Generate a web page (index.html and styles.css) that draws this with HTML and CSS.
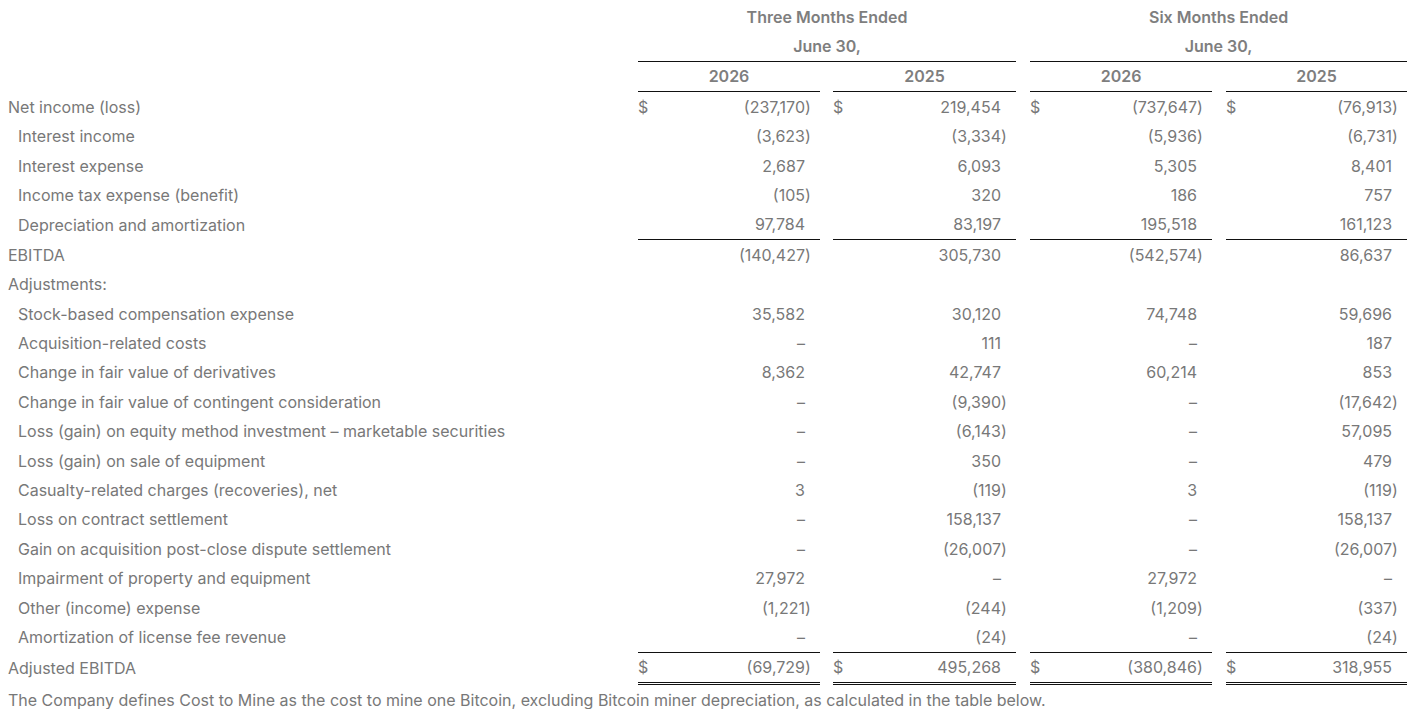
FILE: index.html
```html
<!DOCTYPE html>
<html lang="en">
<head>
<meta charset="utf-8">
<title>Adjusted EBITDA reconciliation</title>
<link rel="stylesheet" href="styles.css">
</head>
<body>
<table class="fin">
  <colgroup>
    <col class="c-label">
    <col class="c-cur"><col class="c-num-a"><col class="c-par">
    <col class="c-gap-a">
    <col class="c-cur"><col class="c-num-b"><col class="c-par">
    <col class="c-gap">
    <col class="c-cur"><col class="c-num-a"><col class="c-par">
    <col class="c-gap">
    <col class="c-cur"><col class="c-num-d"><col class="c-par">
  </colgroup>
  <thead>
    <tr>
      <th></th>
      <th colspan="7" class="hd">Three Months Ended</th>
      <th></th>
      <th colspan="7" class="hd">Six Months Ended</th>
    </tr>
    <tr>
      <th></th>
      <th colspan="7" class="hd line">June 30,</th>
      <th></th>
      <th colspan="7" class="hd line">June 30,</th>
    </tr>
    <tr>
      <th></th>
      <th colspan="3" class="hd line">2026</th>
      <th></th>
      <th colspan="3" class="hd line">2025</th>
      <th></th>
      <th colspan="3" class="hd line">2026</th>
      <th></th>
      <th colspan="3" class="hd line">2025</th>
    </tr>
  </thead>
  <tbody id="rows"></tbody>
</table>
<p class="note">The Company defines Cost to Mine as the cost to mine one Bitcoin, excluding Bitcoin miner depreciation, as calculated in the table below.</p>
<script src="app.js"></script>
</body>
</html>
```

FILE: app.js
```js
const rows = [
  { l: "Net income (loss)", v: ["(237,170)", "219,454", "(737,647)", "(76,913)"], cur: true },
  { l: "Interest income", v: ["(3,623)", "(3,334)", "(5,936)", "(6,731)"], ind: true },
  { l: "Interest expense", v: ["2,687", "6,093", "5,305", "8,401"], ind: true },
  { l: "Income tax expense (benefit)", v: ["(105)", "320", "186", "757"], ind: true },
  { l: "Depreciation and amortization", v: ["97,784", "83,197", "195,518", "161,123"], ind: true, under: true },
  { l: "EBITDA", v: ["(140,427)", "305,730", "(542,574)", "86,637"] },
  { l: "Adjustments:", v: null },
  { l: "Stock-based compensation expense", v: ["35,582", "30,120", "74,748", "59,696"], ind: true },
  { l: "Acquisition-related costs", v: ["–", "111", "–", "187"], ind: true },
  { l: "Change in fair value of derivatives", v: ["8,362", "42,747", "60,214", "853"], ind: true },
  { l: "Change in fair value of contingent consideration", v: ["–", "(9,390)", "–", "(17,642)"], ind: true },
  { l: "Loss (gain) on equity method investment – marketable securities", v: ["–", "(6,143)", "–", "57,095"], ind: true },
  { l: "Loss (gain) on sale of equipment", v: ["–", "350", "–", "479"], ind: true },
  { l: "Casualty-related charges (recoveries), net", v: ["3", "(119)", "3", "(119)"], ind: true },
  { l: "Loss on contract settlement", v: ["–", "158,137", "–", "158,137"], ind: true },
  { l: "Gain on acquisition post-close dispute settlement", v: ["–", "(26,007)", "–", "(26,007)"], ind: true },
  { l: "Impairment of property and equipment", v: ["27,972", "–", "27,972", "–"], ind: true },
  { l: "Other (income) expense", v: ["(1,221)", "(244)", "(1,209)", "(337)"], ind: true },
  { l: "Amortization of license fee revenue", v: ["–", "(24)", "–", "(24)"], ind: true, under: true },
  { l: "Adjusted EBITDA", v: ["(69,729)", "495,268", "(380,846)", "318,955"], cur: true, total: true }
];

const body = document.getElementById("rows");
for (const r of rows) {
  const tr = document.createElement("tr");
  if (r.under) tr.className = "under";
  if (r.total) tr.className = "total";
  const lab = document.createElement("td");
  lab.className = "label" + (r.ind ? " ind" : "");
  lab.textContent = r.l;
  tr.appendChild(lab);
  for (let i = 0; i < 4; i++) {
    if (i > 0) {
      const g = document.createElement("td");
      g.className = "gap";
      tr.appendChild(g);
    }
    const c = document.createElement("td");
    c.className = "cur grp";
    const n = document.createElement("td");
    n.className = "num grp";
    const p = document.createElement("td");
    p.className = "par grp";
    if (r.v) {
      const val = r.v[i];
      if (r.cur) c.textContent = "$";
      if (val.startsWith("(")) {
        n.textContent = val.slice(0, -1);
        p.textContent = ")";
      } else {
        n.textContent = val;
      }
    }
    tr.append(c, n, p);
  }
  body.appendChild(tr);
}
```

FILE: styles.css
```css
html, body {
  background: #ffffff;
}
body {
  margin: 0;
  padding: 2px 8px 0 8px;
  font-family: Inter, "Noto Sans", "Liberation Sans", sans-serif;
  font-size: 16px;
  color: #787878;
}
.fin {
  border-collapse: collapse;
  table-layout: fixed;
  width: 1399px;
}
.c-label { width: 630px; }
.c-cur { width: 20px; }
.c-num-a { width: 147px; }
.c-num-b { width: 148px; }
.c-num-d { width: 146px; }
.c-par { width: 15px; }
.c-gap-a { width: 13px; }
.c-gap { width: 14px; }

.fin th, .fin td {
  padding: 0;
  height: 29.4px;
  line-height: 20px;
  white-space: nowrap;
  vertical-align: middle;
}
.hd {
  font-weight: 600;
  text-align: center;
  color: #7e7e7e;
}
.hd.line {
  border-bottom: 1px solid #111;
}
.label {
  text-align: left;
  padding-left: 1px;
}
.label.ind {
  padding-left: 10px;
}
.cur {
  text-align: left;
  padding-left: 2px;
}
.num {
  text-align: right;
}
.par {
  text-align: left;
}
.under td.grp {
  border-bottom: 1px solid #111;
}
.total td.grp {
  border-bottom: 3px double #111;
}
.note {
  margin: 2px 0 0 0;
  line-height: 26px;
}
```
